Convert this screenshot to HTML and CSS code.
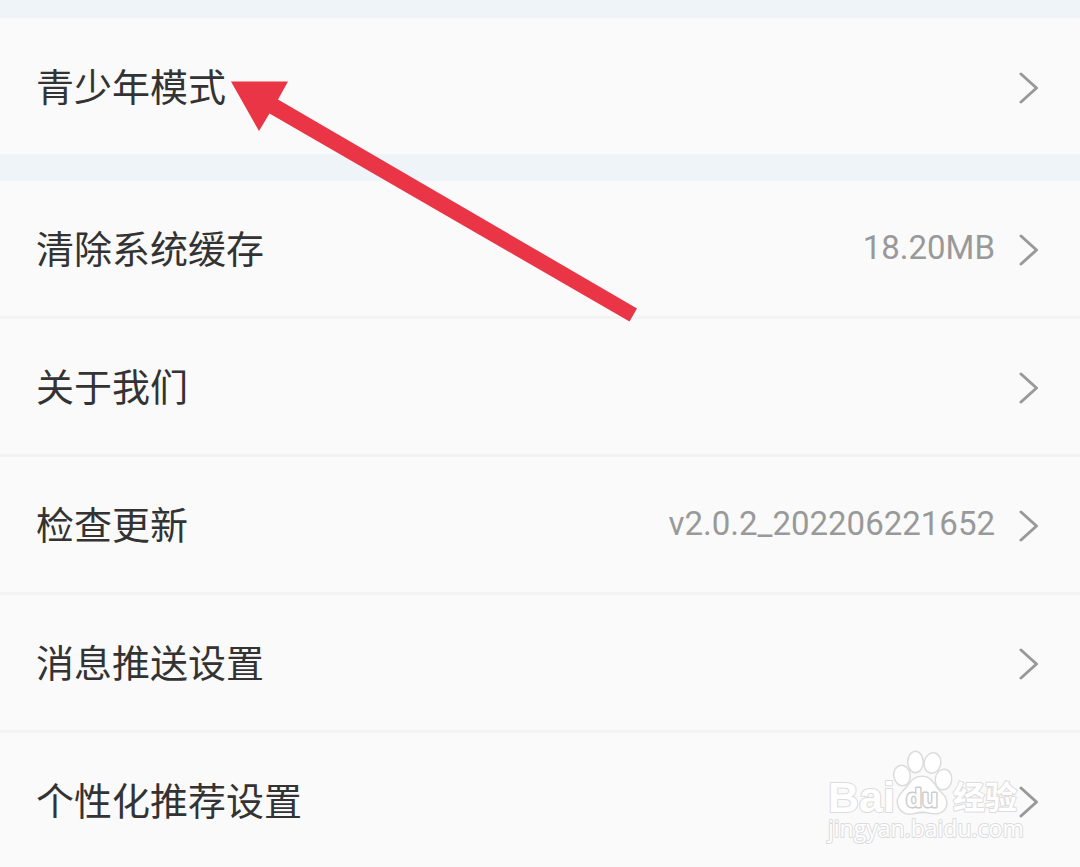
FILE: index.html
```html
<!DOCTYPE html>
<html lang="zh-CN">
<head>
<meta charset="utf-8">
<meta name="viewport" content="width=device-width, initial-scale=1">
<title>设置</title>
<link rel="stylesheet" href="styles.css">
</head>
<body>
<main class="settings">
  <nav class="group">
    <a class="row" href="#teen"><span class="label">青少年模式</span><svg class="chevron" viewBox="0 0 20 32" aria-hidden="true"><path d="M2 2 17.500 16 2 30"/></svg></a>
  </nav>
  <nav class="group">
    <a class="row" href="#cache"><span class="label">清除系统缓存</span><span class="value">18.20MB</span><svg class="chevron" viewBox="0 0 20 32" aria-hidden="true"><path d="M2 2 17.500 16 2 30"/></svg></a>
    <a class="row" href="#about"><span class="label">关于我们</span><svg class="chevron" viewBox="0 0 20 32" aria-hidden="true"><path d="M2 2 17.500 16 2 30"/></svg></a>
    <a class="row" href="#update"><span class="label">检查更新</span><span class="value">v2.0.2_202206221652</span><svg class="chevron" viewBox="0 0 20 32" aria-hidden="true"><path d="M2 2 17.500 16 2 30"/></svg></a>
    <a class="row" href="#push"><span class="label">消息推送设置</span><svg class="chevron" viewBox="0 0 20 32" aria-hidden="true"><path d="M2 2 17.500 16 2 30"/></svg></a>
    <a class="row" href="#recommend"><span class="label">个性化推荐设置</span><svg class="chevron" viewBox="0 0 20 32" aria-hidden="true"><path d="M2 2 17.500 16 2 30"/></svg></a>
  </nav>
  <svg class="arrow" viewBox="0 0 406 241" aria-hidden="true"><path d="M0 0.500H57L47 18.500 406 227.500 398.500 240.500 38.500 32.500 28 50Z"/></svg>
  <svg class="watermark" viewBox="0 0 200 100" role="img" aria-label="Baidu 经验">
    <text class="brand" x="0" y="66">Bai</text>
    <g class="paw">
      <ellipse cx="74" cy="29.500" rx="7.500" ry="9.500" transform="rotate(-10 74 29.500)"/>
      <ellipse cx="87.500" cy="16" rx="7" ry="10"/>
      <ellipse cx="104.500" cy="17" rx="7.500" ry="9.500" transform="rotate(12 104.500 17)"/>
      <ellipse cx="115.500" cy="33.500" rx="7.500" ry="9.500" transform="rotate(8 115.500 33.500)"/>
      <path d="M94 31C103 31 106 39 110 44C115 49 119 52 118 59C116 68 107 68 99 66C94 65 90 66 85 67C76 69 70 63 70 55C71 48 77 45 81 39C84 34 88 31 94 31Z"/>
    </g>
    <text class="du" x="78" y="61">du</text>
    <text class="jingyan" x="125" y="63">经验</text>
    <text class="site" x="0" y="91">jingyan.baidu.com</text>
  </svg>
</main>
</body>
</html>
```
FILE: styles.css
```css
* { box-sizing: border-box; }

body {
  margin: 0;
  background: #fafafa;
  color: #333;
  font-family: "Noto Sans CJK SC", sans-serif;
}

.settings {
  position: relative;
  min-height: 100vh;
  overflow: hidden;
}

.group {
  border-top: 18px solid #eff4f9;
}

.group + .group {
  border-top-width: 27px;
}

.row {
  display: flex;
  align-items: center;
  min-height: 138px;
  padding: 3px 41px 0 36px;
  border-bottom: 3px solid #f3f3f3;
  color: inherit;
  text-decoration: none;
}

.group:first-child .row {
  min-height: 136px;
  border-bottom-width: 1px;
}

.row:last-child {
  min-height: 134px;
  border-bottom: 0;
}

.label {
  flex: 1;
  padding-bottom: 6px;
  font-size: 38px;
  line-height: 56px;
}

.value {
  margin-right: 24px;
  padding-bottom: 4px;
  color: #999;
  font-family: Roboto, sans-serif;
  font-size: 33px;
  line-height: 40px;
}

.chevron {
  flex: none;
  width: 20px;
  height: 32px;
  fill: none;
  stroke: #999;
  stroke-width: 3;
  stroke-linecap: round;
  stroke-linejoin: round;
}

.arrow {
  position: absolute;
  top: 81px;
  left: 231px;
  width: 406px;
  height: 241px;
  fill: #ea3547;
}

.watermark {
  position: absolute;
  right: 52px;
  bottom: 21px;
  width: 200px;
  height: 100px;
  overflow: visible;
  fill: #fff;
  stroke: #dcdcdc;
  stroke-width: 2;
  stroke-linejoin: round;
  paint-order: stroke;
}

.paw {
  stroke-width: 3;
}

.brand {
  font: bold 43px "Liberation Sans", sans-serif;
}

.du {
  stroke: #ccc;
  stroke-width: 3;
  font: bold 26px "Liberation Sans", sans-serif;
}

.jingyan {
  font: bold 32px "Noto Sans CJK SC", sans-serif;
}

.site {
  font: 23px "Open Sans", sans-serif;
}
```
